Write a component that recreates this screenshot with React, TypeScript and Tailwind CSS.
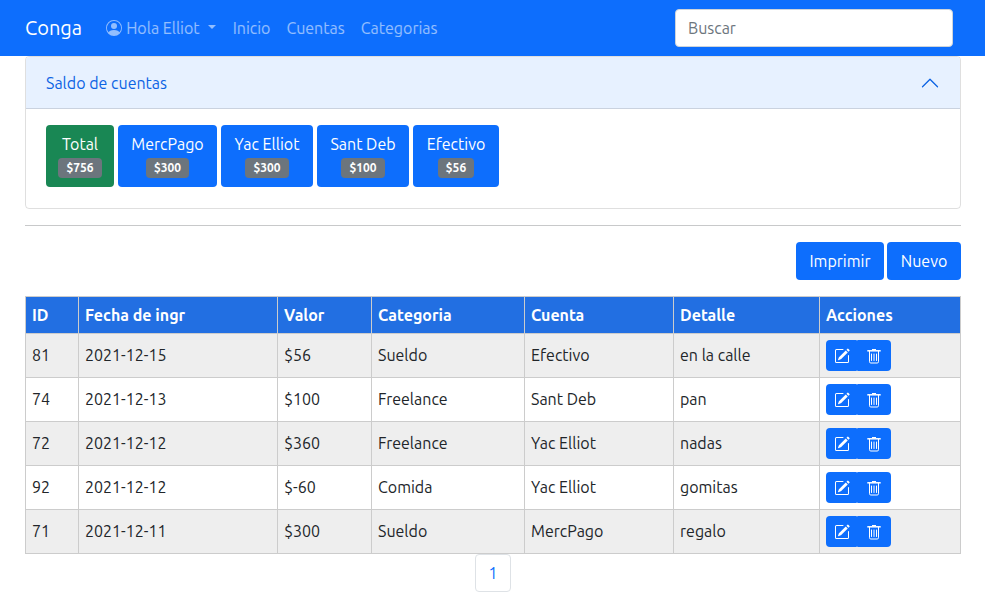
import { BsChevronUp, BsPencilSquare, BsPersonCircle } from "react-icons/bs";

const accounts = [
  { name: "Total", amount: "$756", width: "w-[68px]", color: "bg-[#198754]" },
  { name: "MercPago", amount: "$300", width: "w-[99px]", color: "bg-[#0d6efd]" },
  { name: "Yac Elliot", amount: "$300", width: "w-[92px]", color: "bg-[#0d6efd]" },
  { name: "Sant Deb", amount: "$100", width: "w-[92px]", color: "bg-[#0d6efd]" },
  { name: "Efectivo", amount: "$56", width: "w-[86px]", color: "bg-[#0d6efd]" },
];

const columns = [
  { label: "ID", width: "w-[53px]" },
  { label: "Fecha de ingr", width: "w-[199px]" },
  { label: "Valor", width: "w-[94px]" },
  { label: "Categoria", width: "w-[153px]" },
  { label: "Cuenta", width: "w-[149px]" },
  { label: "Detalle", width: "w-[146px]" },
  { label: "Acciones", width: "w-[141px]" },
];

const rows = [
  ["81", "2021-12-15", "$56", "Sueldo", "Efectivo", "en la calle"],
  ["74", "2021-12-13", "$100", "Freelance", "Sant Deb", "pan"],
  ["72", "2021-12-12", "$360", "Freelance", "Yac Elliot", "nadas"],
  ["92", "2021-12-12", "$-60", "Comida", "Yac Elliot", "gomitas"],
  ["71", "2021-12-11", "$300", "Sueldo", "MercPago", "regalo"],
];

function TrashIcon() {
  return (
    <svg viewBox="0 0 16 16" fill="none" stroke="currentColor" className="size-4" aria-hidden="true">
      <path d="M6 1.5h4" />
      <path d="M1.3 2.8h13.4" strokeWidth="1.5" />
      <path d="M3.5 3v10.7a1.3 1.3 0 0 0 1.3 1.3h6.4a1.3 1.3 0 0 0 1.3-1.3V3" />
      <path d="M5.5 6v6.5M8 6v6.5M10.5 6v6.5" strokeLinecap="round" />
    </svg>
  );
}

function Navbar() {
  return (
    <header className="flex h-14 items-center bg-[#0d6efd] pr-8 pl-[25px]">
      <a href="#" className="mr-6 text-xl leading-8 text-white">
        Conga
      </a>
      <nav className="flex items-center gap-4 text-white/55">
        <button type="button" className="flex items-center">
          <BsPersonCircle className="mr-1 size-4" />
          Hola Elliot
          <span className="mr-px mb-0.5 ml-2 border-x-4 border-t-4 border-x-transparent border-t-current" />
        </button>
        <a href="#">Inicio</a>
        <a href="#">Cuentas</a>
        <a href="#">Categorias</a>
      </nav>
      <input
        type="search"
        aria-label="Buscar"
        placeholder="Buscar"
        className="ml-auto h-[38px] w-[278px] rounded border border-[#ced4da] bg-white px-3 text-[#212529] placeholder:text-[#6c757d]"
      />
    </header>
  );
}

function Balances() {
  return (
    <section className="overflow-hidden rounded border border-black/[.125]">
      <h2>
        <button
          type="button"
          aria-expanded="true"
          className="flex w-full items-center justify-between border-b border-black/[.125] bg-[#e7f1ff] px-5 pt-[14px] pb-[13px] text-[#0c63e4]"
        >
          Saldo de cuentas
          <BsChevronUp className="size-5" />
        </button>
      </h2>
      <div className="flex flex-wrap gap-1 px-5 pt-4 pb-[21px]">
        {accounts.map((account) => (
          <button
            key={account.name}
            type="button"
            className={`flex h-[62px] flex-col items-center rounded pt-[7px] text-white ${account.width} ${account.color}`}
          >
            {account.name}
            <span className="mt-0.5 rounded bg-[#6c757d] px-2 text-xs leading-5 font-bold">
              {account.amount}
            </span>
          </button>
        ))}
      </div>
    </section>
  );
}

function Entries() {
  return (
    <table className="w-full table-fixed border-collapse text-left">
      <thead>
        <tr className="h-[37px] bg-[#226fe2] text-white">
          {columns.map((column) => (
            <th key={column.label} className={`border border-[#ccc] px-1.5 font-bold ${column.width}`}>
              {column.label}
            </th>
          ))}
        </tr>
      </thead>
      <tbody>
        {rows.map((row) => (
          <tr key={row[0]} className="h-11 odd:bg-[#eee]">
            {row.map((value, index) => (
              <td key={columns[index].label} className="border border-[#ccc] px-1.5 pb-0.5">
                {value}
              </td>
            ))}
            <td className="border border-[#ccc] px-1.5">
              <div className="flex text-white">
                <button
                  type="button"
                  aria-label="Editar"
                  className="flex h-[31px] w-[31px] items-center justify-center rounded-l rounded-r-[1px] bg-[#0d6efd]"
                >
                  <BsPencilSquare className="size-4" />
                </button>
                <button
                  type="button"
                  aria-label="Eliminar"
                  className="flex h-[31px] w-[34px] items-center justify-center rounded-l-[1px] rounded-r bg-[#0d6efd]"
                >
                  <TrashIcon />
                </button>
              </div>
            </td>
          </tr>
        ))}
      </tbody>
    </table>
  );
}

export default function App() {
  return (
    <div className="min-h-screen bg-white font-[Ubuntu,'Noto_Sans',sans-serif] text-base leading-6 text-[#212529]">
      <Navbar />
      <main className="pr-6 pl-[25px]">
        <Balances />
        <hr className="my-4 border-[#c8c9ca]" />
        <div className="mb-4 flex justify-end gap-[3px]">
          <button type="button" className="h-[38px] w-[88px] rounded bg-[#0d6efd] text-white">
            Imprimir
          </button>
          <button type="button" className="h-[38px] w-[74px] rounded bg-[#0d6efd] text-white">
            Nuevo
          </button>
        </div>
        <Entries />
        <nav aria-label="Paginación" className="flex justify-center">
          <a href="#" className="rounded border border-[#dee2e6] px-3 py-1.5 text-[#0d6efd]">
            1
          </a>
        </nav>
      </main>
    </div>
  );
}
